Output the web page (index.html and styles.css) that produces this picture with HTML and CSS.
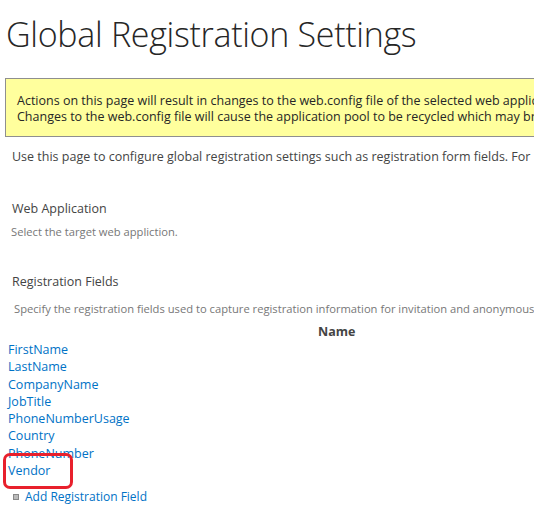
FILE: index.html
```html
<!DOCTYPE html>
<html>
<head>
<meta charset="utf-8">
<link rel="stylesheet" href="styles.css">
</head>
<body>
<div class="page">
  <h1 class="title">Global Registration Settings</h1>
  <div class="warning">
    <div>Actions on this page will result in changes to the web.config file of the selected web application.</div>
    <div>Changes to the web.config file will cause the application pool to be recycled which may bring the site down.</div>
  </div>
  <p class="intro">Use this page to configure global registration settings such as registration form fields. For more information.</p>
  <div class="section s-web">
    <div class="sec-title">Web Application</div>
    <div class="sec-desc">Select the target web appliction.</div>
  </div>
  <div class="section s-reg">
    <div class="sec-title">Registration Fields</div>
    <div class="sec-desc wide">Specify the registration fields used to capture registration information for invitation and anonymous users.</div>
  </div>
  <div class="col-head">Name</div>
  <ul class="fields">
    <li><a href="#">FirstName</a></li>
    <li><a href="#">LastName</a></li>
    <li><a href="#">CompanyName</a></li>
    <li><a href="#">JobTitle</a></li>
    <li><a href="#">PhoneNumberUsage</a></li>
    <li><a href="#">Country</a></li>
    <li><a href="#">PhoneNumber</a></li>
    <li class="marked"><a href="#">Vendor</a><span class="highlight"></span></li>
  </ul>
  <div class="add"><span class="bullet"></span><a href="#">Add Registration Field</a></div>
</div>
</body>
</html>
```
FILE: styles.css
```css
html, body { margin: 0; padding: 0; background: #fff; }
body { font-family: "Open Sans", "Noto Sans", sans-serif; color: #444; overflow: hidden; width: 534px; height: 528px; }
.page { padding: 0; overflow: hidden; }
.title {
  margin: 0;
  padding: 12px 0 0 6px;
  font-family: "Open Sans", sans-serif;
  font-weight: 300;
  font-size: 34px;
  line-height: 44px;
  color: #262626;
  white-space: nowrap;
  letter-spacing: -0.3px;
}
.warning {
  margin: 22px 0 0 5px;
  background: #ffff9d;
  border: 1px solid #8f8f8f;
  border-right: none;
  padding: 14px 0 11px 11px;
  font-size: 12.5px;
  line-height: 16px;
  color: #262626;
  white-space: nowrap;
  overflow: hidden;
}
.intro {
  margin: 12px 0 0 12px;
  font-size: 12.5px;
  line-height: 16px;
  color: #444;
  white-space: nowrap;
  overflow: hidden;
}
.section { margin-left: 12px; }
.s-web { margin-top: 36px; }
.s-reg { margin-top: 35px; }
.sec-title { font-size: 12.5px; line-height: 16px; color: #444; }
.sec-desc { font-size: 11.2px; line-height: 14px; color: #777; margin-top: 8px; margin-left: -1px; white-space: nowrap; overflow: hidden; }
.sec-desc.wide { margin-top: 12px; margin-left: 2px; }
.col-head { margin: 8px 0 0 318px; font-weight: bold; font-size: 12.5px; line-height: 16px; color: #444; }
.fields { list-style: none; margin: 1px 0 0 8px; padding: 0; }
.fields li { font-size: 12.5px; line-height: 17.3px; height: 17.3px; position: relative; }
a { color: #0072c6; text-decoration: none; }
.highlight {
  position: absolute;
  left: -5px; top: -9px;
  width: 64px; height: 30px;
  border: 3px solid #e8202c;
  border-radius: 7px;
}
.add { margin: 10px 0 0 13px; display: flex; align-items: center; gap: 6px; font-size: 12px; line-height: 16px; }
.bullet { width: 4px; height: 4px; border: 1px solid #888; background: #bbb; display: inline-block; }
```
